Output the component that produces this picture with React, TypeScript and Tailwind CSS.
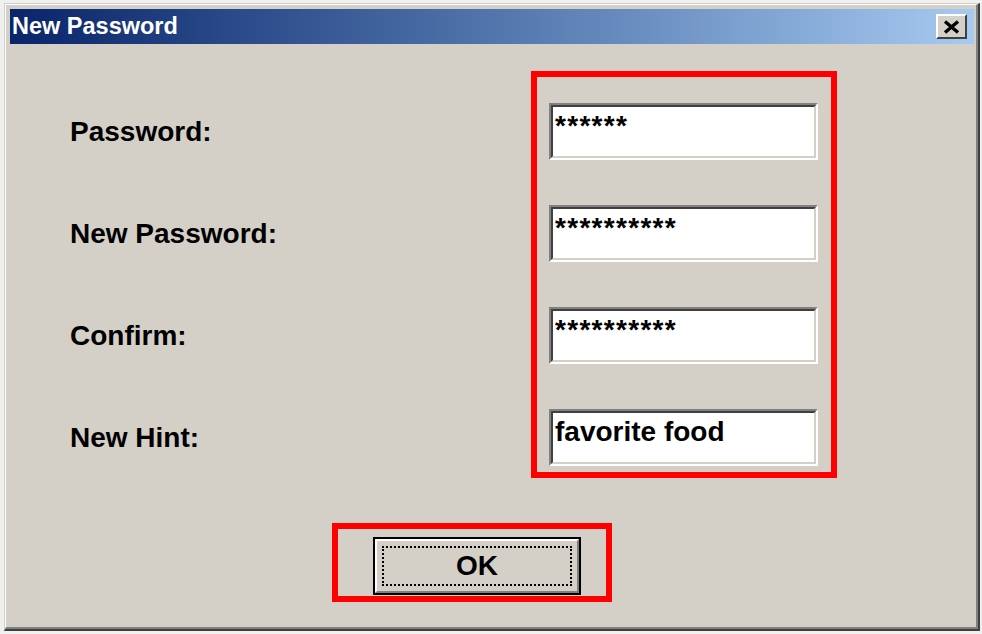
import React from "react";

const FONT = { fontFamily: '"Liberation Sans", Arial, sans-serif' };

function Field({ value, stars }: { value: string; stars?: boolean }) {
  return (
    <div className="w-[269px] h-[57px] border-t-2 border-l-2 border-[#808080] border-r-2 border-b-2 border-r-white border-b-white">
      <div className="w-full h-full bg-white border-t-2 border-l-2 border-[#404040] border-r-2 border-b-2 border-r-[#d4d0c8] border-b-[#d4d0c8] pl-[2px] pt-[3px]">
        <div
          className={`text-[28px] leading-[32px] font-bold text-black whitespace-nowrap ${stars ? "tracking-[1.3px]" : ""}`}
        >
          {value}
        </div>
      </div>
    </div>
  );
}

function Label({ text }: { text: string }) {
  return (
    <div className="h-[57px] flex items-center">
      <span className="text-[28px] leading-[31px] font-bold text-black">{text}</span>
    </div>
  );
}

export default function App() {
  return (
    <div className="w-[982px] h-[634px] bg-[#f0f0f0] pl-[4px] pt-[3px]" style={FONT}>
      <div className="w-[976px] h-[628px] flex border-t border-l border-[#d4d0c8] border-r-2 border-b-2 border-r-[#404040] border-b-[#404040]">
        <div className="flex-1 flex flex-col bg-[#d4d0c8] border-t border-l border-white border-r-2 border-b-2 border-r-[#808080] border-b-[#808080] pt-[4px] pl-[4px] pr-[2px]">
          {/* Title bar */}
          <div className="h-[35px] flex items-center justify-between bg-gradient-to-r from-[#0a246a] to-[#a6caf0] pl-[2px] pr-[7px]">
            <span className="text-white font-bold text-[23.5px] leading-none">New Password</span>
            <div className="w-[31px] h-[25px] border-t-2 border-l-2 border-white border-r-2 border-b-2 border-r-[#404040] border-b-[#404040] bg-[#d4d0c8] flex items-center justify-center">
              <svg width="17" height="14" viewBox="0 0 17 14">
                <path d="M2 1.5 L15 12.5 M15 1.5 L2 12.5" stroke="#000" strokeWidth="3.4" />
              </svg>
            </div>
          </div>

          {/* Form */}
          <div className="flex pt-[27px]">
            <div className="w-[521px] pl-[60px] pt-[32px] flex flex-col gap-[45px]">
              <Label text="Password:" />
              <Label text="New Password:" />
              <Label text="Confirm:" />
              <Label text="New Hint:" />
            </div>
            <div className="w-[306px] border-[6px] border-[#ff0000] pt-[26px] pl-[12px] pr-[13px] pb-[6px] flex flex-col gap-[45px]">
              <Field value="******" stars />
              <Field value="**********" stars />
              <Field value="**********" stars />
              <Field value="favorite food" />
            </div>
          </div>

          {/* OK */}
          <div className="mt-[45px] ml-[322px] w-[280px] h-[79px] border-[6px] border-[#ff0000] pt-[8px] pl-[35px]">
            <div className="w-[208px] h-[58px] border-2 border-black">
              <div className="w-full h-full border-t-2 border-l-2 border-white border-r-2 border-b-2 border-r-[#808080] border-b-[#808080] bg-[#d4d0c8] p-[5px]">
                <div className="w-full h-full border-2 border-dotted border-black flex items-center justify-center">
                  <span className="text-[28px] leading-none font-bold text-black">OK</span>
                </div>
              </div>
            </div>
          </div>
        </div>
      </div>
    </div>
  );
}
